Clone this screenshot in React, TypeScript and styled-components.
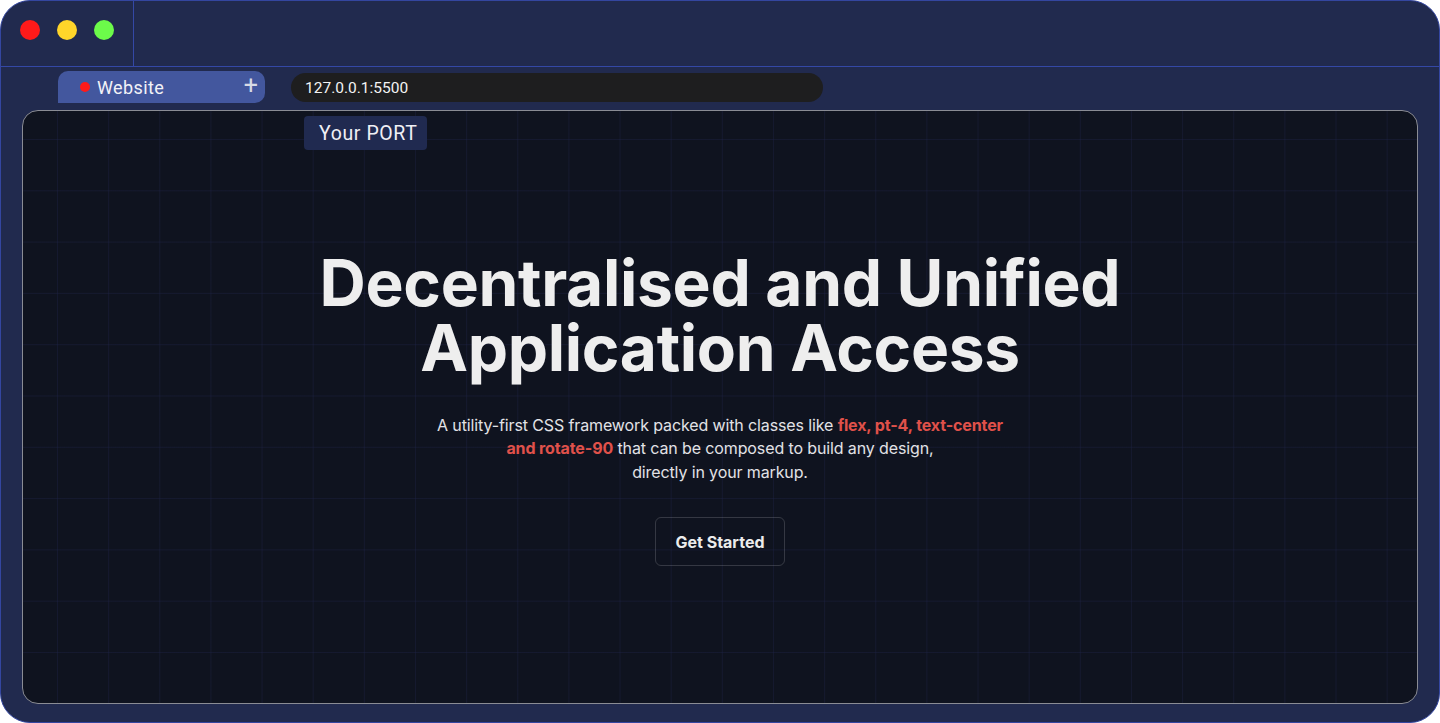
import React from "react";
import styled, { createGlobalStyle } from "styled-components";

const Global = createGlobalStyle`
  html, body { margin: 0; padding: 0; background: #ffffff; }
  body { font-family: Inter, "Noto Sans", sans-serif; }
  * { box-sizing: border-box; }
`;

const Frame = styled.div`
  width: 1440px;
  height: 723px;
  background: #212a4e;
  border: 1px solid #3446a0;
  border-radius: 30px;
  display: flex;
  flex-direction: column;
  overflow: hidden;
  position: relative;
`;

const TopBar = styled.div`
  height: 66px;
  flex: none;
  display: flex;
  border-bottom: 1px solid #3448a6;
`;

const Lights = styled.div`
  width: 133px;
  border-right: 1px solid #3448a6;
  display: flex;
  align-items: center;
  gap: 17px;
  padding-left: 19px;
  padding-bottom: 8px;
`;

const Light = styled.span<{ $c: string }>`
  width: 20px;
  height: 20px;
  border-radius: 50%;
  background: ${(p) => p.$c};
`;

const TabRow = styled.div`
  height: 43px;
  flex: none;
  display: flex;
  align-items: flex-start;
  padding: 4px 0 0 57px;
  gap: 26px;
`;

const Tab = styled.div`
  width: 207px;
  height: 32px;
  background: #43579e;
  border-radius: 10px 10px 10px 0;
  display: flex;
  align-items: center;
  padding: 0 7px 0 22px;
  color: #f2f2f7;
  font-family: Roboto, "DejaVu Sans", sans-serif;
  font-size: 18px;
`;

const Dot = styled.span`
  width: 10px;
  height: 10px;
  border-radius: 50%;
  background: #ff1a1a;
  margin-right: 7px;
`;

const TabLabel = styled.span`
  flex: 1;
  letter-spacing: 0.4px;
`;

const Plus = styled.span`
  font-size: 25px;
  font-weight: 400;
  color: #d8dbe6;
  line-height: 1;
  margin-top: -3px;
`;

const UrlBar = styled.div`
  margin-top: 2px;
  width: 532px;
  height: 29px;
  border-radius: 15px;
  background: #1e1e1f;
  color: #f3f3f3;
  font-family: Roboto, sans-serif;
  font-size: 15.5px;
  display: flex;
  align-items: center;
  padding-left: 14px;
`;

const Viewport = styled.div`
  flex: 1;
  margin: 0 21px 18px 21px;
  border: 1px solid #8a8c94;
  border-radius: 16px;
  background-color: #0f131f;
  background-image:
    linear-gradient(to right, rgba(36, 40, 84, 0.3) 1px, transparent 1px),
    linear-gradient(to bottom, rgba(36, 40, 84, 0.3) 1px, transparent 1px);
  background-size: 51.15px 51.3px;
  background-position: 34px 28px;
  display: flex;
  flex-direction: column;
  align-items: center;
  justify-content: center;
  padding-top: 2px;
`;

const PortBadge = styled.div`
  position: absolute;
  left: 303px;
  top: 115px;
  width: 123px;
  height: 34px;
  background: #202a50;
  border-radius: 4px;
  color: #f0f0f5;
  font-family: Roboto, sans-serif;
  font-size: 19.5px;
  letter-spacing: 0.6px;
  display: flex;
  align-items: center;
  padding-left: 15px;
`;

const Title = styled.h1`
  margin: 0;
  color: #eeeeee;
  font-family: Inter, sans-serif;
  font-weight: 700;
  font-size: 64px;
  line-height: 65px;
  letter-spacing: -0.3px;
  text-align: center;
`;

const Lead = styled.p`
  margin: 34px 0 0;
  width: 580px;
  color: #e2e2e6;
  font-family: Inter, sans-serif;
  font-size: 16px;
  line-height: 23.5px;
  letter-spacing: -0.12px;
  text-align: center;
`;

const Hi = styled.strong`
  color: #e0514a;
  font-weight: 700;
`;

const Button = styled.button`
  margin-top: 33px;
  width: 130px;
  height: 49px;
  background: transparent;
  border: 1px solid rgba(255, 255, 255, 0.16);
  border-radius: 6px;
  color: #ececec;
  font-family: Inter, sans-serif;
  font-weight: 700;
  font-size: 16px;
  cursor: pointer;
`;

export default function App() {
  return (
    <>
      <Global />
      <Frame>
        <TopBar>
          <Lights>
            <Light $c="#ff1a1a" />
            <Light $c="#ffd52a" />
            <Light $c="#6cfb4a" />
          </Lights>
        </TopBar>
        <TabRow>
          <Tab>
            <Dot />
            <TabLabel>Website</TabLabel>
            <Plus>+</Plus>
          </Tab>
          <UrlBar>127.0.0.1:5500</UrlBar>
        </TabRow>
        <Viewport>
          <Title>
            Decentralised and Unified
            <br />
            Application Access
          </Title>
          <Lead>
            A utility-first CSS framework packed with classes like{" "}
            <Hi>flex, pt-4, text-center and rotate-90</Hi> that can be composed to build any design,
            <br />
            directly in your markup.
          </Lead>
          <Button>Get Started</Button>
        </Viewport>
        <PortBadge>Your PORT</PortBadge>
      </Frame>
    </>
  );
}
